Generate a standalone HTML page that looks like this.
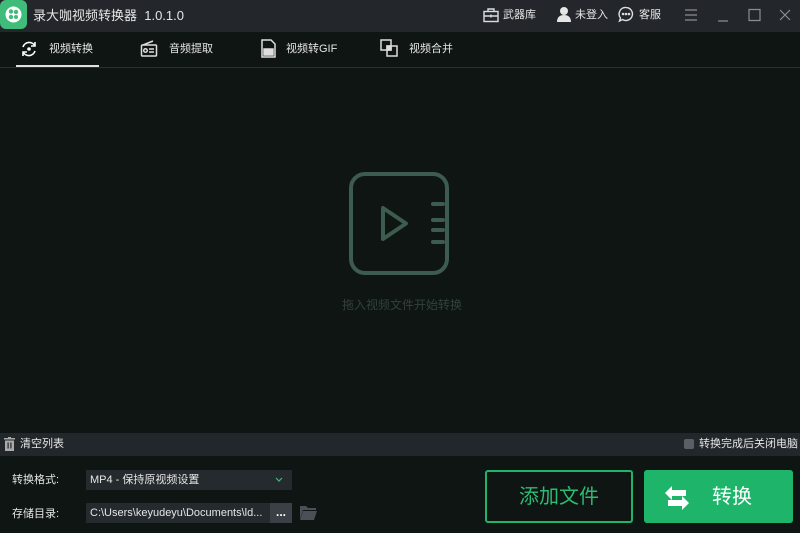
<!DOCTYPE html>
<html><head><meta charset="utf-8"><style>
*{margin:0;padding:0;box-sizing:border-box}
body{width:800px;height:533px;background:#0e1513;font-family:"Liberation Sans","Noto Sans CJK SC",sans-serif;position:relative;overflow:hidden;color:#ddd}
.a{position:absolute}
.t{font-size:11px;color:#e6e6e6;white-space:nowrap;line-height:14px}
</style></head><body>
<div class="a" style="left:0;top:0;width:800px;height:32px;background:#23272c"></div>
<div class="a" style="left:0;top:0;width:27px;height:29px;background:#3fbb7a;border-radius:6px"></div>
<svg class="a" style="left:3px;top:4px" width="21" height="21" viewBox="0 0 21 21"><circle cx="10.5" cy="10.5" r="8" fill="#fff"/><circle cx="8" cy="7.5" r="2.2" fill="#3fbb7a"/><circle cx="13" cy="8" r="2.2" fill="#3fbb7a"/><circle cx="8" cy="13" r="2.2" fill="#3fbb7a"/><circle cx="13" cy="13" r="2" fill="#3fbb7a"/></svg>
<div class="a t" style="left:33px;top:7px;font-size:13px;line-height:17px">录大咖视频转换器&nbsp; 1.0.1.0</div>
<svg class="a" style="left:483px;top:8px" width="16" height="15" viewBox="0 0 16 15" fill="none" stroke="#ddd" stroke-width="1.4"><rect x="1" y="3.5" width="14" height="10"/><path d="M5 3.5V1h6v2.5M1 8h14M8 6.5v3"/></svg>
<div class="a t" style="left:503px;top:8px">武器库</div>
<svg class="a" style="left:556px;top:6px" width="16" height="17" viewBox="0 0 16 17" fill="#e6e6e6"><circle cx="8" cy="5" r="4"/><path d="M1 16c0-5 3-7 7-7s7 2 7 7z"/></svg>
<div class="a t" style="left:575px;top:8px">未登入</div>
<svg class="a" style="left:618px;top:6px" width="16" height="17" viewBox="0 0 16 17" fill="none" stroke="#ddd" stroke-width="1.4"><path d="M8 1.5a6.5 6.5 0 1 1-3.5 12L1.5 15l1-3A6.5 6.5 0 0 1 8 1.5z"/><circle cx="5" cy="8" r=".6" fill="#ddd"/><circle cx="8" cy="8" r=".6" fill="#ddd"/><circle cx="11" cy="8" r=".6" fill="#ddd"/></svg>
<div class="a t" style="left:639px;top:8px">客服</div>
<svg class="a" style="left:684px;top:8px" width="110" height="16" viewBox="0 0 110 16" fill="none" stroke="#8a8d92" stroke-width="1.2"><path d="M1 2h12M1 7h12M1 12h12M34 13h10M65 1.5h11v11H65zM96 2l10 10M106 2 96 12"/></svg>
<div class="a" style="left:0;top:32px;width:800px;height:36px;background:#0e1513;border-bottom:1px solid #2a3033"></div>
<svg class="a" style="left:20px;top:40px" width="18" height="18" viewBox="0 0 18 18" fill="none" stroke="#fff" stroke-width="1.6"><path d="M3 7a6.5 6.5 0 0 1 12-1M15 11a6.5 6.5 0 0 1-12 1"/><path d="M15 2v4h-4M3 16v-4h4"/><circle cx="9" cy="9" r="1" fill="#fff"/></svg>
<div class="a t" style="left:49px;top:42px">视频转换</div>
<div class="a" style="left:16px;top:65px;width:83px;height:2px;background:#e0e0e0"></div>
<svg class="a" style="left:140px;top:40px" width="18" height="18" viewBox="0 0 18 18" fill="none" stroke="#ddd" stroke-width="1.5"><rect x="1.5" y="5" width="15" height="11" rx="1"/><path d="M3 5 13 1"/><circle cx="5.5" cy="10.5" r="1.8"/><path d="M9 9h5M9 12h5"/></svg>
<div class="a t" style="left:169px;top:42px">音频提取</div>
<svg class="a" style="left:261px;top:39px" width="15" height="19" viewBox="0 0 15 19" fill="none" stroke="#ddd" stroke-width="1.5"><path d="M1 1h9l4 4v13H1z"/><rect x="3" y="10" width="9" height="6" fill="#ddd"/></svg>
<div class="a t" style="left:286px;top:42px">视频转GIF</div>
<svg class="a" style="left:380px;top:39px" width="18" height="18" viewBox="0 0 18 18" fill="none" stroke="#ddd" stroke-width="1.5"><rect x="1" y="1" width="10" height="10"/><rect x="7" y="7" width="10" height="10"/><rect x="7" y="7" width="4" height="4" fill="#ddd"/></svg>
<div class="a t" style="left:409px;top:42px">视频合并</div>
<svg class="a" style="left:349px;top:172px" width="100" height="103" viewBox="0 0 100 103" fill="none" stroke="#3d5b4f" stroke-width="4" stroke-linecap="round" stroke-linejoin="round"><rect x="2" y="2" width="96" height="99" rx="14"/><path d="M34 36v31l23-15.5z"/><path d="M84 32h10M84 48h10M84 58h10M84 70h10"/></svg>
<div class="a t" style="left:342px;top:298px;color:#33413b;font-size:12px">拖入视频文件开始转换</div>
<div class="a" style="left:0;top:433px;width:800px;height:23px;background:#22272b"></div>
<svg class="a" style="left:4px;top:437px" width="11" height="14" viewBox="0 0 11 14" fill="#aaa"><rect x="0" y="1" width="11" height="1.5"/><rect x="4" y="0" width="3" height="1.5"/><path d="M1 3.5h9V14H1z"/><rect x="3.5" y="5.5" width="1.2" height="6" fill="#22272b"/><rect x="6.3" y="5.5" width="1.2" height="6" fill="#22272b"/></svg>
<div class="a t" style="left:20px;top:437px">清空列表</div>
<div class="a" style="left:684px;top:439px;width:10px;height:10px;background:#5a5f66;border-radius:2px"></div>
<div class="a t" style="left:699px;top:437px">转换完成后关闭电脑</div>
<div class="a t" style="left:12px;top:473px">转换格式:</div>
<div class="a" style="left:86px;top:470px;width:206px;height:20px;background:#242a2d"></div>
<div class="a t" style="left:90px;top:473px">MP4 - 保持原视频设置</div>
<svg class="a" style="left:275px;top:477px" width="8" height="5" viewBox="0 0 8 5" fill="none" stroke="#3fbb7a" stroke-width="1.2"><path d="M1 1l3 3 3-3"/></svg>
<div class="a t" style="left:12px;top:507px">存储目录:</div>
<div class="a" style="left:86px;top:503px;width:184px;height:20px;background:#242a2d"></div>
<div class="a t" style="left:90px;top:506px">C:\Users\keyudeyu\Documents\ld...</div>
<div class="a" style="left:270px;top:503px;width:22px;height:20px;background:#3a4045;color:#fff;font-size:12px;text-align:center;line-height:18px;font-weight:bold">...</div>
<svg class="a" style="left:300px;top:505px" width="17" height="15" viewBox="0 0 17 15" fill="#4a5055"><path d="M0 1h6l2 2h8v2H3L0 14z"/><path d="M3 6h14l-3 9H0z"/></svg>
<div class="a" style="left:485px;top:470px;width:148px;height:53px;border:2px solid #1eb56b;border-radius:3px;color:#2dbb73;font-size:20px;text-align:center;line-height:51px">添加文件</div>
<div class="a" style="left:644px;top:470px;width:149px;height:53px;background:#1eb56b;border-radius:3px;color:#fff;font-size:20px;line-height:55px;padding-left:68px">转换</div>
<svg class="a" style="left:663px;top:484px" width="28" height="28" viewBox="0 0 28 28" fill="#fff"><path d="M2 9 9 2v4h14v6H9v4z"/><path d="M26 19l-7 7v-4H5v-6h14v-4z"/></svg>
</body></html>
